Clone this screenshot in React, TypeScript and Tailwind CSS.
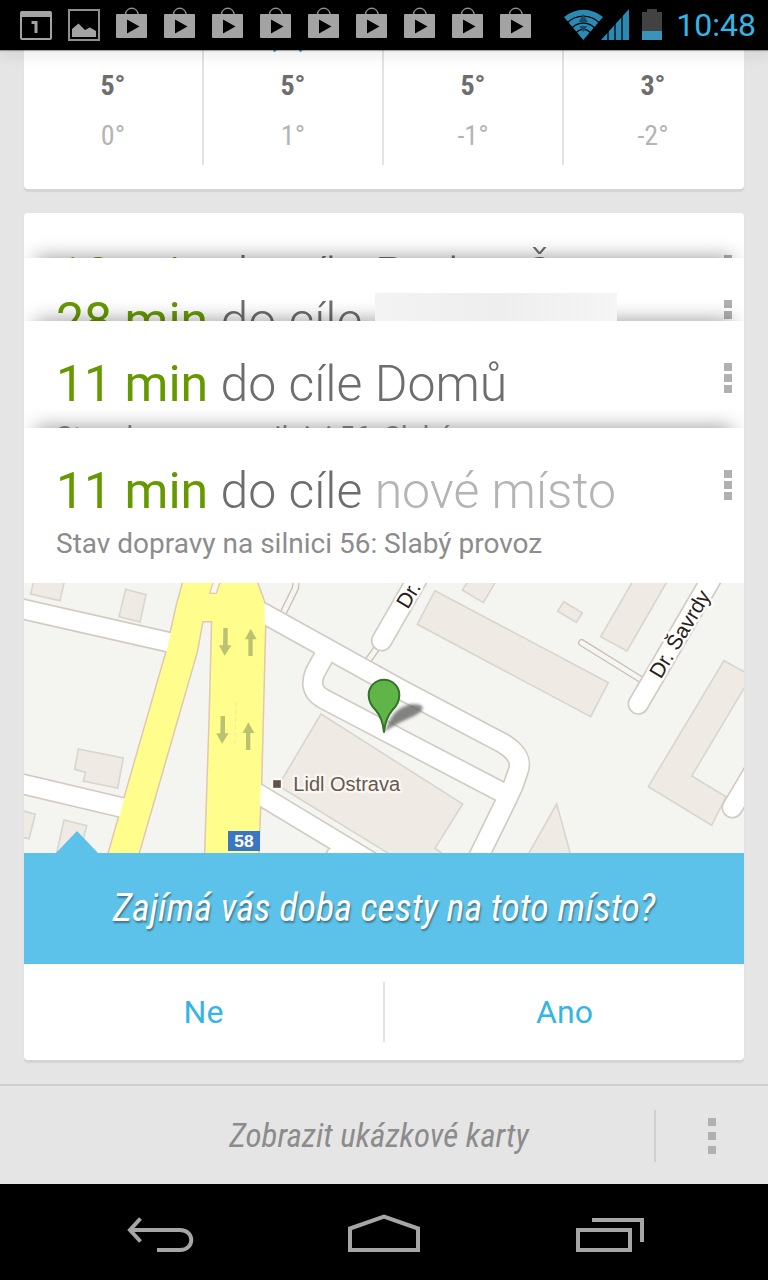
import type { ReactNode } from "react";

const days = [
    { high: "5°", low: "0°", rain: false },
    { high: "5°", low: "1°", rain: true },
    { high: "5°", low: "-1°", rain: false },
    { high: "3°", low: "-2°", rain: false },
];

const traffic = "Stav dopravy na silnici 56: Slabý provoz";

const condensed = "font-['Roboto_Condensed','Liberation_Sans_Narrow',Roboto,sans-serif]";

function CalendarIcon() {
    return (
        <svg width="32" height="32" viewBox="0 0 32 32" aria-hidden="true">
            <rect x="1" y="3" width="30" height="27" rx="1" fill="none" stroke="#a3a3a3" strokeWidth="2" />
            <rect x="1" y="2" width="30" height="6" fill="#a3a3a3" />
            <path d="M11.500 12h6v12h-3v-9h-3z" fill="#a3a3a3" />
        </svg>
    );
}

function PictureIcon() {
    return (
        <svg width="32" height="32" viewBox="0 0 32 32" aria-hidden="true">
            <rect x="1" y="1" width="30" height="30" fill="none" stroke="#8f8f8f" strokeWidth="2" />
            <path d="M4 28v-8l6.500-5.500 6.500 6.500 5-2.500 6 3.500v6z" fill="#a3a3a3" />
        </svg>
    );
}

function StoreIcon() {
    return (
        <svg className="overflow-visible" width="32" height="32" viewBox="0 0 32 32" aria-hidden="true">
            <path d="M9.500 5a6.300 6.500 0 0 1 12.500 0" fill="none" stroke="#8f8f8f" strokeWidth="1.500" />
            <rect x="0" y="5" width="31" height="24" rx="1" fill="#a3a3a3" />
            <path d="M11 10.500v14l12.500-7z" fill="#000" />
        </svg>
    );
}

function SignalIcons() {
    return (
        <svg width="66" height="32" viewBox="0 0 66 32" aria-hidden="true">
            <path d="M19.300 31L0 8A30 30 0 0 1 39 8z" fill="#2b8ab3" />
            <g fill="none" stroke="#000" strokeWidth="1.300">
                <path d="M3.500 13.500A22.500 22.500 0 0 1 35 13.500" />
                <path d="M8 19A15.500 15.500 0 0 1 30.500 19" />
                <path d="M12 24A9 9 0 0 1 26.500 24" />
            </g>
            <path d="M19.300 5l4.500 8h-9zM19.300 23l-4-6h8z" fill="#164e68" />
            <path d="M37 31L65 0v31z" fill="#2b8ab3" />
            <path d="M44 32V18M51 32V12M58 32V4" stroke="#000" strokeWidth="1.300" />
        </svg>
    );
}

function BatteryIcon() {
    return (
        <svg width="20" height="32" viewBox="0 0 20 32" aria-hidden="true">
            <path d="M0 3h5V0h10v3h5v20H0z" fill="#424242" />
            <path d="M0 22h20v9H0z" fill="#3a93bb" />
        </svg>
    );
}

function StatusBar() {
    return (
        <header className="relative z-20 flex h-[50px] items-center bg-black pl-5 pr-3 shadow-[0_1px_1px_rgba(0,0,0,0.3),0_6px_14px_rgba(0,0,0,0.08)]">
            <div className="flex gap-4">
                <CalendarIcon />
                <PictureIcon />
                {[...Array(9)].map((_, i) => (
                    <StoreIcon key={i} />
                ))}
            </div>
            <div className="ml-auto flex items-center gap-3">
                <SignalIcons />
                <BatteryIcon />
                <span className="pl-0.5 text-[32px] leading-10 text-[#33b5e5]">10:48</span>
            </div>
        </header>
    );
}

function Weather() {
    return (
        <section className={`rounded-b-sm bg-white pb-6 shadow-[0_3px_1px_#d4d4d4] ${condensed}`}>
            <div className="grid grid-cols-4">
                {days.map((day, i) => (
                    <div
                        key={i}
                        className="border-r-2 border-[#e3e3e3] pb-1 text-center text-[28px] last:border-transparent"
                    >
                        <svg className="mx-auto" width="40" height="3" viewBox="0 0 40 3" aria-hidden="true">
                            {day.rain && <path d="M0 0h4L1 2.500zM26 0h4l-3 2.500z" fill="#33a5d5" />}
                        </svg>
                        <div className="pt-2 font-bold leading-[50px] text-[#6d6d6d]">{day.high}</div>
                        <div className="leading-[50px] text-[#b4b4b4]">{day.low}</div>
                    </div>
                ))}
            </div>
        </section>
    );
}

function MenuButton() {
    return (
        <button className="mt-2.5 flex flex-col gap-[3px]" aria-label="Menu">
            <span className="size-2 bg-[#b0b0b0]" />
            <span className="size-2 bg-[#b0b0b0]" />
            <span className="size-2 bg-[#b0b0b0]" />
        </button>
    );
}

function TripHeader({ time, detail, children }: { time: string; detail?: string; children: ReactNode }) {
    return (
        <div className="pb-[17px] pl-8 pr-3 pt-8">
            <div className="flex items-start justify-between">
                <h2 className="flex whitespace-pre text-[50px] font-light leading-[62px] text-[#6d6d6d]">
                    <span className="font-normal text-[#669900]">{time}</span> do cíle {children}
                </h2>
                <MenuButton />
            </div>
            {detail && <p className="text-[28px] leading-11 text-[#8c8c8c]">{detail}</p>}
        </div>
    );
}

// the next card in the stack throws its shadow up on this one
function StackShadow() {
    return <div className="absolute inset-x-3 top-full h-10 shadow-[0_0_20px_rgba(0,0,0,0.42)]" />;
}

function TripMap() {
    return (
        <svg
            className="block h-[270px] w-full"
            viewBox="12 9 2160 810"
            preserveAspectRatio="xMidYMid slice"
            role="img"
            aria-label="Mapa"
        >
            <defs>
                <filter id="soft">
                    <feGaussianBlur stdDeviation="4" />
                </filter>
                <g id="roads">
                    <path d="M-10 83L452 188" />
                    <path d="M-10 608L312 684" />
                    <path d="M729 99L1140 327L1452 492Q1512 530 1494 575Q1480 620 1461 657L1375 832" />
                    <path d="M914 225L885 278Q864 330 908 355L1180 498L1452 640" />
                    <path d="M714 641L1100 874" />
                    <path d="M1085 182L1198 -14" />
                    <path d="M1855 372L2080 -14" />
                    <path d="M2137 683L2210 560" />
                </g>
                <path
                    id="highway"
                    d="M492 0L471 75L440 215L265 825H354L530 215L547 123H577L570 400L556 825H714L723 608L735 134L733 68L708 0z"
                />
            </defs>
            <rect x="0" y="0" width="2180" height="830" fill="#f4f5f0" />
            <g fill="#efebe4" stroke="#d9d6d0" strokeWidth="5">
                <path d="M42 0L32 42L120 62L134 0z" />
                <path d="M317 28L378 44L360 126L297 110z" />
                <path d="M175 507L310 534L293 624L190 603L197 577L164 568z" />
                <path d="M0 690L46 703L27 776L0 770z" />
                <path d="M108 828L132 720L200 737L178 828z" />
                <path d="M903 402L1328 672L1245 805L1275 826H1115L775 617z" />
                <path d="M1245 32L1765 308L1712 410L1192 133z" />
                <path d="M1345 3L1327 30L1390 68L1428 3z" />
                <path d="M1631 65L1687 98L1669 127L1613 94z" />
                <path d="M1839 3L1742 170L1821 213L1942 3z" />
                <path d="M2112 242L2190 285V295L2015 588L2118 650L2075 736L1885 620z" />
                <path d="M1610 672L1522 828H1653z" />
            </g>
            <g fill="none" strokeLinecap="round">
                <g stroke="#c9c0b8" strokeWidth="22">
                    <path d="M829 0L826 25L790 98M1070 205L1042 245M1685 188L1870 303" />
                </g>
                <g stroke="#f6f5f2" strokeWidth="14">
                    <path d="M829 0L826 25L790 98M1070 205L1042 245M1685 188L1870 303" />
                </g>
            </g>
            <use href="#highway" fill="none" stroke="#dfc9b0" strokeWidth="9" />
            <use href="#roads" fill="none" stroke="#d3cbc3" strokeWidth="65" strokeLinecap="round" />
            <path d="M928 803L914 828H990z" fill="#fff" stroke="#d3cbc3" strokeWidth="5" />
            <use href="#roads" fill="none" stroke="#fff" strokeWidth="55" strokeLinecap="round" />
            <path d="M934 803L923 828H1000z" fill="#fff" />
            <use href="#highway" fill="#fffd8b" />
            <path d="M580 5L569 40H589L601 5" fill="#f8f7f0" stroke="#dfc9b0" strokeWidth="4" />
            <g fill="#bac272">
                <path d="M610 144h13v52h11l-20 31l-17-31h12z" />
                <path d="M692 146l18 32h-12v50h-13v-50h-10z" />
                <path d="M602 408h13v52h11l-20 31l-17-31h12z" />
                <path d="M685 427l18 32h-12v51h-13v-51h-10z" />
            </g>
            <path d="M649 365L644 495" stroke="#eeeb9e" strokeWidth="3" strokeDasharray="14 9" />
            <path d="M1094 456C1110 420 1120 385 1175 372Q1220 372 1204 393C1180 415 1140 420 1094 456z" fill="#666" opacity="0.8" filter="url(#soft)" />
            <path
                d="M1092 458C1090 430 1084 410 1066 389C1050 374 1046 360 1046 345A46 46 0 0 1 1138 345C1138 360 1134 374 1118 389C1100 410 1094 430 1092 458z"
                fill="#5fb548"
                stroke="#36702a"
                strokeWidth="6"
            />
            <rect x="757" y="598" width="28" height="28" fill="#655247" stroke="#fff" strokeWidth="5" />
            <rect x="624" y="753" width="96" height="60" fill="#3b76c5" />
            <g fontFamily="'Liberation Sans', Arial, sans-serif" fontSize="60" strokeLinejoin="round" paintOrder="stroke">
                <text x="820" y="632" fill="#6a574c" stroke="#f8f7f4" strokeWidth="14">
                    Lidl Ostrava
                </text>
                <text x="672" y="801" fill="#fff" fontSize="52" fontWeight="bold" textAnchor="middle">
                    58
                </text>
                <g fill="#2b2018" stroke="#fff" strokeWidth="14" fontSize="63">
                    <text transform="translate(1163 90) rotate(-59)">Dr.</text>
                    <text transform="translate(1922 299) rotate(-59)">Dr. Šavrdy</text>
                </g>
            </g>
        </svg>
    );
}

function TripStack() {
    return (
        <section className="rounded-sm bg-white shadow-[0_3px_1px_#d4d4d4]">
            <div className="relative h-[45px] overflow-hidden">
                <TripHeader time="18 min">Praha, Š</TripHeader>
                <StackShadow />
            </div>
            <div className="relative h-[63px] overflow-hidden">
                <TripHeader time="28 min">
                    <span className="relative z-10 mt-[3px] h-14 w-[242px] bg-linear-to-r from-[#f3f3f3] via-[#eeeeee] to-[#f5f5f5]" />
                </TripHeader>
                <StackShadow />
            </div>
            <div className="relative h-[107px] overflow-hidden">
                <TripHeader time="11 min" detail={traffic}>
                    Domů
                </TripHeader>
                <StackShadow />
            </div>
            <TripHeader time="11 min" detail={traffic}>
                <span className="text-[#b4b4b4]">nové místo</span>
            </TripHeader>
            <TripMap />
            <div className="relative bg-[#5dc2e9] py-7 text-center">
                <svg className="absolute -top-[22px] left-8" width="42" height="22" viewBox="0 0 42 22" aria-hidden="true">
                    <path d="M0 22L21 0l21 22z" fill="#5dc2e9" />
                </svg>
                <p className={`text-[38px] italic leading-[55px] text-white [text-shadow:1px_2px_2px_rgba(0,0,0,0.4)] ${condensed}`}>
                    Zajímá vás doba cesty na toto místo?
                </p>
            </div>
            <div className="flex py-[18px] text-[32px] leading-[60px] text-[#33b5e5]">
                <button className="flex-1">Ne</button>
                <button className="flex-1 border-l-2 border-[#e3e3e3]">Ano</button>
            </div>
        </section>
    );
}

function NavBar() {
    return (
        <nav className="grid grid-cols-3 bg-black px-12 py-7 text-[#a6a6a6]">
            <button className="flex justify-center" aria-label="Zpět">
                <svg width="68" height="40" viewBox="0 0 68 40" fill="none" stroke="currentColor" strokeWidth="4">
                    <path d="M14.500 6.500L4 18L14.500 29.500M5 18H54C69 18 69 38 54 38H31" />
                </svg>
            </button>
            <button className="flex justify-center" aria-label="Domů">
                <svg width="72" height="40" viewBox="0 0 72 40" fill="none" stroke="currentColor" strokeWidth="4">
                    <path d="M2 38V16.500L36 4.500L70 16.500V38z" />
                </svg>
            </button>
            <button className="flex justify-center" aria-label="Poslední aplikace">
                <svg width="72" height="40" viewBox="-4 0 72 40" fill="none" stroke="currentColor" strokeWidth="4">
                    <path d="M2 18H54V38H2zM16 8H66V30" />
                </svg>
            </button>
        </nav>
    );
}

export default function App() {
    return (
        <div className="flex min-h-screen flex-col bg-[#e5e5e5] font-[Roboto,sans-serif]">
            <StatusBar />
            <main className="flex flex-1 flex-col gap-6 px-6 pb-6">
                <Weather />
                <TripStack />
            </main>
            <footer className="flex items-center border-t-2 border-[#cfcfcf] pb-[22px] pt-6">
                <button className={`flex-1 pl-26 text-[33px] italic leading-[52px] text-[#8c8c8c] ${condensed}`}>
                    Zobrazit ukázkové karty
                </button>
                <button className="flex h-[52px] w-[114px] flex-col items-center justify-center gap-1.5 border-l-2 border-[#cfcfcf]" aria-label="Menu">
                    <span className="size-2 bg-[#b0b0b0]" />
                    <span className="size-2 bg-[#b0b0b0]" />
                    <span className="size-2 bg-[#b0b0b0]" />
                </button>
            </footer>
            <NavBar />
        </div>
    );
}
